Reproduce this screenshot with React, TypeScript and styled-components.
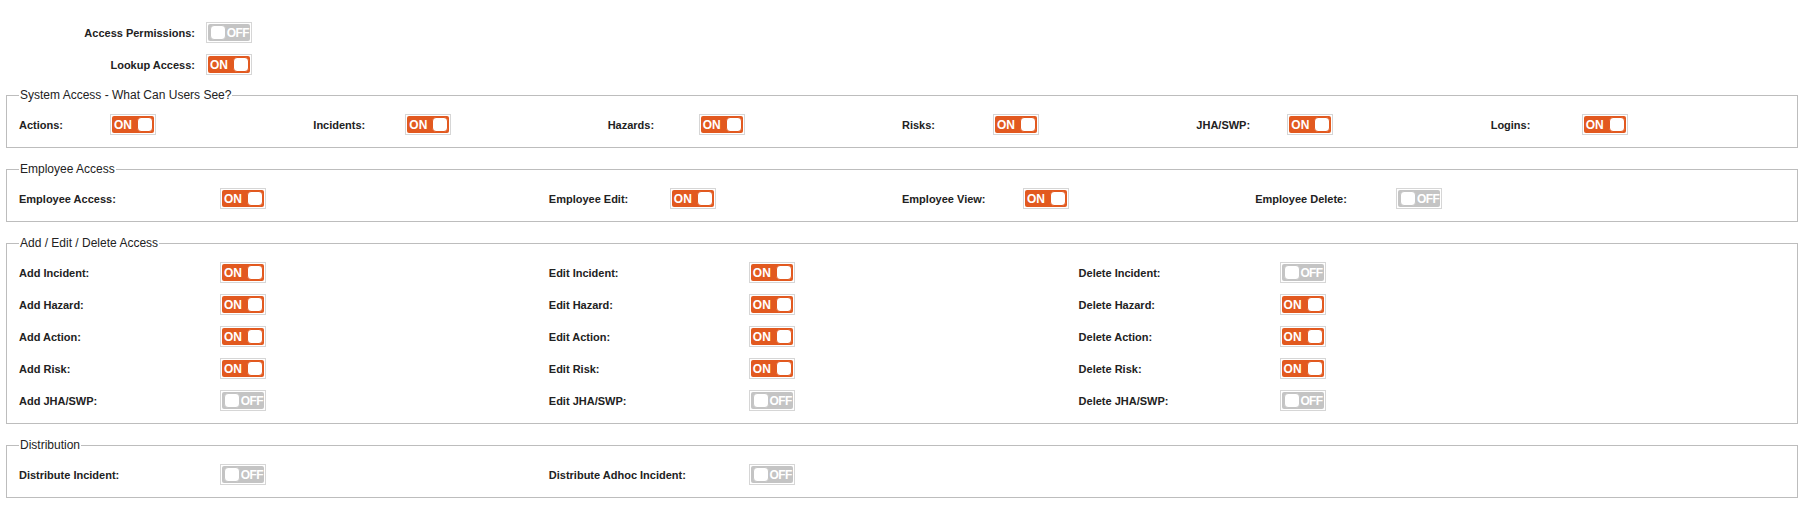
import React from "react";
import styled, { createGlobalStyle } from "styled-components";

const Global = createGlobalStyle`
  html, body { margin: 0; padding: 0; background: #ffffff; }
  body { font-family: "Liberation Sans", Arial, sans-serif; color: #222; }
`;

const Page = styled.div`
  padding: 22px 10px 20px 6px;
  display: flex;
  flex-direction: column;
`;

const TopBlock = styled.div`
  display: flex;
  flex-direction: column;
  gap: 11px;
  margin-bottom: 13px;
`;

const TopRow = styled.div`
  display: grid;
  grid-template-columns: 189px auto;
  column-gap: 11px;
  align-items: center;
  justify-content: start;
`;

const TopLabel = styled.span`
  text-align: right;
  font-size: 11px;
  font-weight: bold;
  color: #222;
`;

const Section = styled.fieldset`
  margin: 0 0 14px 0;
  padding: 12px 12px 12px;
  border: 1px solid #bdbdbd;
  min-width: 0;
`;

const Legend = styled.legend`
  padding: 0 1px;
  font-size: 12px;
  line-height: 14px;
  color: #222;
`;

const Grid = styled.div<{ $cols: string }>`
  display: grid;
  grid-template-columns: ${(p) => p.$cols};
  row-gap: 11px;
`;

const Cell = styled.div<{ $label: number }>`
  display: grid;
  grid-template-columns: ${(p) => p.$label}px auto;
  align-items: center;
  justify-content: start;
  height: 21px;
`;

const Label = styled.span`
  font-size: 11px;
  font-weight: bold;
  color: #222;
  white-space: nowrap;
`;

const ToggleFrame = styled.span`
  display: inline-flex;
  box-sizing: border-box;
  width: 46px;
  height: 21px;
  padding: 1px;
  border: 1px solid #d6d6d6;
`;

const ToggleBody = styled.span<{ $on: boolean }>`
  flex: 1;
  display: flex;
  align-items: center;
  flex-direction: ${(p) => (p.$on ? "row" : "row-reverse")};
  justify-content: space-between;
  background: ${(p) => (p.$on ? "#e2591f" : "#c4c4c4")};
  border-radius: 2px;
  padding: 0 1px 0 2px;
  box-sizing: border-box;
`;

const ToggleText = styled.span<{ $on: boolean }>`
  font-size: 12px;
  font-weight: bold;
  color: #fff;
  line-height: 1;
  letter-spacing: ${(p) => (p.$on ? "0" : "-0.6px")};
  margin-top: 1px;
`;

const Knob = styled.span<{ $on: boolean }>`
  width: 16px;
  height: 15px;
  box-sizing: border-box;
  background: #fff;
  border-radius: 4px;
  border: 1px solid ${(p) => (p.$on ? "#e2591f" : "#c4c4c4")};
`;

const Toggle: React.FC<{ on: boolean }> = ({ on }) => (
  <ToggleFrame>
    <ToggleBody $on={on}>
      <ToggleText $on={on}>{on ? "ON" : "OFF"}</ToggleText>
      <Knob $on={on} />
    </ToggleBody>
  </ToggleFrame>
);

type Item = { label: string; on: boolean; w: number };

const Field: React.FC<Item> = ({ label, on, w }) => (
  <Cell $label={w}>
    <Label>{label}</Label>
    <Toggle on={on} />
  </Cell>
);

const system: Item[] = [
  { label: "Actions:", on: true, w: 91 },
  { label: "Incidents:", on: true, w: 92 },
  { label: "Hazards:", on: true, w: 91 },
  { label: "Risks:", on: true, w: 91 },
  { label: "JHA/SWP:", on: true, w: 91 },
  { label: "Logins:", on: true, w: 91 },
];

const employee: Item[] = [
  { label: "Employee Access:", on: true, w: 201 },
  { label: "Employee Edit:", on: true, w: 121 },
  { label: "Employee View:", on: true, w: 121 },
  { label: "Employee Delete:", on: false, w: 141 },
];

const aed: Item[] = [
  { label: "Add Incident:", on: true, w: 201 },
  { label: "Edit Incident:", on: true, w: 200 },
  { label: "Delete Incident:", on: false, w: 201 },
  { label: "Add Hazard:", on: true, w: 201 },
  { label: "Edit Hazard:", on: true, w: 200 },
  { label: "Delete Hazard:", on: true, w: 201 },
  { label: "Add Action:", on: true, w: 201 },
  { label: "Edit Action:", on: true, w: 200 },
  { label: "Delete Action:", on: true, w: 201 },
  { label: "Add Risk:", on: true, w: 201 },
  { label: "Edit Risk:", on: true, w: 200 },
  { label: "Delete Risk:", on: true, w: 201 },
  { label: "Add JHA/SWP:", on: false, w: 201 },
  { label: "Edit JHA/SWP:", on: false, w: 200 },
  { label: "Delete JHA/SWP:", on: false, w: 201 },
];

const distribution: Item[] = [
  { label: "Distribute Incident:", on: false, w: 201 },
  { label: "Distribute Adhoc Incident:", on: false, w: 200 },
];

export default function App() {
  return (
    <>
      <Global />
      <Page>
        <TopBlock>
          <TopRow>
            <TopLabel>Access Permissions:</TopLabel>
            <Toggle on={false} />
          </TopRow>
          <TopRow>
            <TopLabel>Lookup Access:</TopLabel>
            <Toggle on={true} />
          </TopRow>
        </TopBlock>

        <Section>
          <Legend>System Access - What Can Users See?</Legend>
          <Grid $cols="repeat(6, 1fr)">
            {system.map((it) => (
              <Field key={it.label} {...it} />
            ))}
          </Grid>
        </Section>

        <Section>
          <Legend>Employee Access</Legend>
          <Grid $cols="30% 20% 20% 30%">
            {employee.map((it) => (
              <Field key={it.label} {...it} />
            ))}
          </Grid>
        </Section>

        <Section>
          <Legend>Add / Edit / Delete Access</Legend>
          <Grid $cols="30% 30% 40%">
            {aed.map((it) => (
              <Field key={it.label} {...it} />
            ))}
          </Grid>
        </Section>

        <Section>
          <Legend>Distribution</Legend>
          <Grid $cols="30% 30% 40%">
            {distribution.map((it) => (
              <Field key={it.label} {...it} />
            ))}
          </Grid>
        </Section>
      </Page>
    </>
  );
}
